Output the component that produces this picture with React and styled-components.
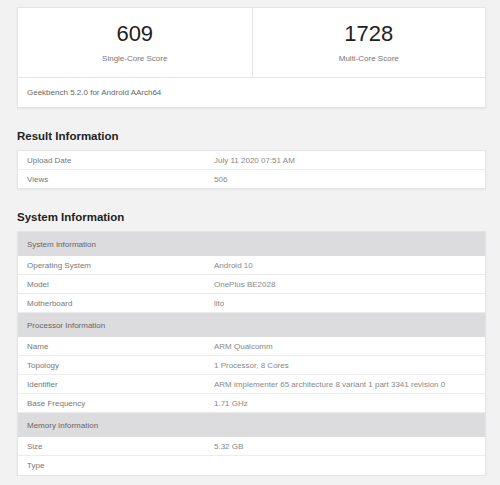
import React from 'react';
import styled, { createGlobalStyle } from 'styled-components';

const GlobalStyle = createGlobalStyle`
  body {
    margin: 0;
    background: #f2f2f3;
    font-family: 'Liberation Sans', Arial, sans-serif;
  }
`;

const results = [
  ['Upload Date', 'July 11 2020 07:51 AM'],
  ['Views', '506'],
];

const system = [
  {
    title: 'System Information',
    rows: [
      ['Operating System', 'Android 10'],
      ['Model', 'OnePlus BE2028'],
      ['Motherboard', 'lito'],
    ],
  },
  {
    title: 'Processor Information',
    rows: [
      ['Name', 'ARM Qualcomm'],
      ['Topology', '1 Processor, 8 Cores'],
      ['Identifier', 'ARM implementer 65 architecture 8 variant 1 part 3341 revision 0'],
      ['Base Frequency', '1.71 GHz'],
    ],
  },
  {
    title: 'Memory Information',
    rows: [
      ['Size', '5.32 GB'],
      ['Type', ''],
    ],
  },
];

const App = () => {
  return (
    <Page>
      <GlobalStyle />
      <ScoreCard>
        <Scores>
          <Score>
            <Number>609</Number>
            <Label>Single-Core Score</Label>
          </Score>
          <Score>
            <Number>1728</Number>
            <Label>Multi-Core Score</Label>
          </Score>
        </Scores>
        <Footer>Geekbench 5.2.0 for Android AArch64</Footer>
      </ScoreCard>

      <Heading>Result Information</Heading>
      <Table>
        {results.map(([name, value]) => (
          <Row key={name} $short>
            <Cell>{name}</Cell>
            <Cell>{value}</Cell>
          </Row>
        ))}
      </Table>

      <Heading>System Information</Heading>
      <Table>
        {system.map((group) => (
          <React.Fragment key={group.title}>
            <GroupHeader>{group.title}</GroupHeader>
            {group.rows.map(([name, value]) => (
              <Row key={name}>
                <Cell>{name}</Cell>
                <Cell>{value}</Cell>
              </Row>
            ))}
          </React.Fragment>
        ))}
      </Table>
    </Page>
  );
};

const Page = styled.div`
  padding: 7px 14px 0 17px;
`;

const ScoreCard = styled.div`
  background: #fff;
  border: 1px solid #e4e4e6;
  box-shadow: 0 1px 2px rgba(0, 0, 0, 0.06);
`;

const Scores = styled.div`
  display: grid;
  grid-template-columns: 1fr 1fr;
  border-bottom: 1px solid #e6e6e8;
`;

const Score = styled.div`
  height: 69px;
  display: flex;
  flex-direction: column;
  align-items: center;
  padding-top: 14px;
  box-sizing: border-box;

  & + & {
    border-left: 1px solid #e6e6e8;
  }
`;

const Number = styled.div`
  font-size: 22px;
  line-height: 24px;
  color: #222;
`;

const Label = styled.div`
  margin-top: 8px;
  font-size: 8px;
  line-height: 10px;
  color: #777;
`;

const Footer = styled.div`
  height: 29px;
  display: flex;
  align-items: center;
  padding-left: 9px;
  font-size: 8px;
  color: #666;
`;

const Heading = styled.h2`
  margin: 20px 0 6px;
  font-size: 11.5px;
  line-height: 16px;
  font-weight: bold;
  color: #222;
`;

const Table = styled.div`
  background: #fff;
  border: 1px solid #e4e4e6;
  box-shadow: 0 1px 2px rgba(0, 0, 0, 0.05);
`;

const Row = styled.div`
  display: grid;
  grid-template-columns: 196px 1fr;
  height: 19px;
  box-sizing: border-box;
  border-bottom: 1px solid #ececee;

  &:last-child {
    height: ${(p) => (p.$short ? 18 : 19)}px;
    border-bottom: none;
  }
`;

const Cell = styled.div`
  display: flex;
  align-items: center;
  padding-left: 9px;
  font-size: 8px;
  color: #777;
  white-space: nowrap;

  & + & {
    padding-left: 0;
    color: #888;
  }
`;

const GroupHeader = styled.div`
  height: 24px;
  display: flex;
  align-items: center;
  padding-left: 9px;
  background: #dcdcdf;
  font-size: 8px;
  color: #666;
`;

export default App;
